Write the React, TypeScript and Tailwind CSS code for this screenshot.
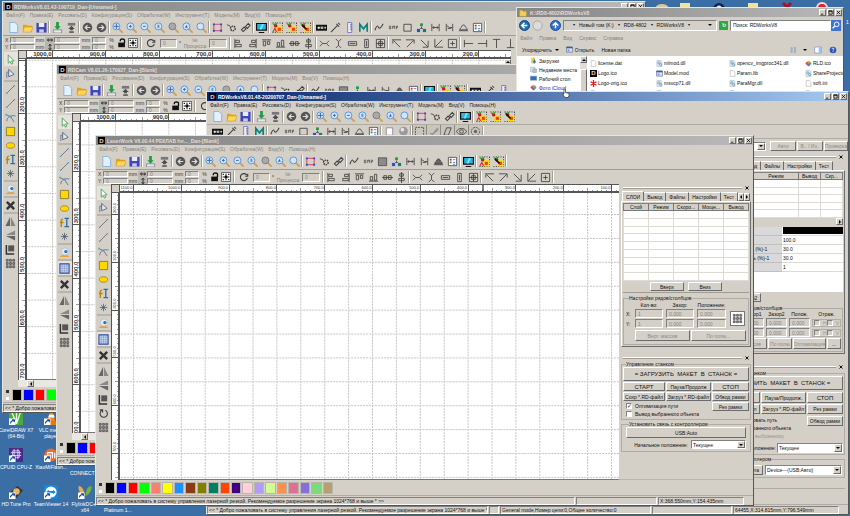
import { Fragment, type ReactNode } from "react";
import clsx from "clsx";

const raised = "border border-t-white border-l-white border-r-[#6b6b6b] border-b-[#6b6b6b]";
const sunken = "border border-t-[#808080] border-l-[#808080] border-r-white border-b-white";
const etched = "border border-[#b0aca4]";

/* ---------- icons ---------- */

function lens(inner?: ReactNode, ring = "#5a8fd2", glass = "#cfe6fa") {
  return (
    <>
      <path d="M7.5 7.5L11 11" stroke="#cf9f56" strokeWidth="2" strokeLinecap="round" />
      <circle cx="4.8" cy="4.8" r="3.8" fill={glass} stroke={ring} strokeWidth="1" />
      {inner}
    </>
  );
}

function job(mark: ReactNode) {
  return (
    <>
      <path d="M0.5 1h11M0.5 11.5h11M11.5 1v10" stroke="#222" strokeDasharray="1 1.6" fill="none" />
      <rect x="5.5" y="5.5" width="5" height="5" fill="#f33" stroke="#f6e200" strokeWidth="1.6" />
      <circle cx="4" cy="4" r="1.9" fill="#c11" />
      <path d="M1 2l3 1 1-2" stroke="#2a9a2a" strokeWidth="1.3" fill="none" />
      {mark}
    </>
  );
}

const dark = { stroke: "#3d3d3d", strokeWidth: 0.9, fill: "none" };

const icons: Record<string, ReactNode> = {
  new: <path d="M2 .5h5.5l3 3v8H2z" fill="#e3f1fd" stroke="#6aa7dc" strokeWidth=".8" />,
  open: (
    <>
      <path d="M1 3h4l1 1h5v7H1z" fill="#e2a51c" />
      <path d="M2.5 5.5H12l-2 5.5H1z" fill="#ffd659" stroke="#c88b12" strokeWidth=".5" />
    </>
  ),
  save: (
    <>
      <path d="M.5 1h11v10.5H.5z" fill="#3f45b8" />
      <path d="M3 1h6v4.5H3z" fill="#e8ecff" />
      <path d="M3.5 8h5v3.5h-5z" fill="#c9cdea" />
    </>
  ),
  download: (
    <>
      <path d="M1.5 8.5h9V12h-9z" fill="#e8e8e8" stroke="#6e7b86" strokeWidth=".8" />
      <path d="M6 8.5L2.5 4.500h2V0h3v4.500h2z" fill="#1d9e3f" />
    </>
  ),
  upload: (
    <>
      <path d="M2 1h8v3H2z" fill="#777" />
      <path d="M6 4l3.5 3.5h-2V9h-3V7.5h-2z" fill="#4c4c4c" />
      <path d="M3.5 10h5v2h-5z" fill="#666" />
    </>
  ),
  undo: (
    <>
      <circle cx="6" cy="6" r="5.2" fill="#555" />
      <path d="M9 6H3.5M6 3.5L3.5 6 6 8.5" stroke="#ddd" strokeWidth="1.3" fill="none" />
    </>
  ),
  redo: (
    <>
      <circle cx="6" cy="6" r="5.2" fill="#555" />
      <path d="M3 6h5.500M6 3.5L8.5 6 6 8.5" stroke="#ddd" strokeWidth="1.3" fill="none" />
    </>
  ),
  zoomMove: lens(<path d="M4.8 2v5.600M2 4.8h5.600" stroke="#2f62b4" />),
  zoomIn: lens(<path d="M4.8 3.3v3M3.3 4.8h3" stroke="#2f62b4" />),
  zoomOut: lens(<path d="M3.3 4.8h3" stroke="#2f62b4" />),
  zoomPage: lens(<path d="M3.7 3h2.200v3.600H3.700z" fill="#6d93c4" />),
  zoomData: lens(null, "#7d7d7d", "#a9a9a9"),
  zoomSel: lens(<path d="M3.3 6.3l1.500-3.300 1.500 3.300z" fill="#2f62b4" />),
  zoomAll: lens(),
  frame: (
    <>
      <path d="M2 2.500h8v7H2z" fill="none" stroke="#d33a5e" />
      <path d="M1 1.500h2v2H1zM9 1.500h2v2H9zM1 8.500h2v2H1zM9 8.500h2v2H9z" fill="#3246c7" />
    </>
  ),
  gear: (
    <>
      <circle cx="7.5" cy="7" r="2.5" {...dark} strokeDasharray="1.5 .8" strokeWidth={1.6} />
      <path d="M1 3l3 1 1 2" {...dark} />
    </>
  ),
  link: <path d="M1.5 8.5l3-3 2 2-3 3zM6 5l3-3.500 2 2L8 7z" {...dark} strokeWidth={1.1} />,
  monitor: (
    <>
      <path d="M0 1h12v8.500H0zM3 11h6v1H3z" fill="#101010" />
      <path d="M1.3 2.200h9.400v6H1.300z" fill="#22b8e6" />
      <path d="M6.5 2.200h2L6 8.200H4z" fill="#8ae4fa" />
    </>
  ),
  jobA: job(<path d="M1 11l2-4 2 4" stroke="#e22" strokeWidth="1.2" fill="none" />),
  jobB: job(null),
  jobC: job(<path d="M2 3l5 5" stroke="#111" strokeWidth="1.8" />),
  laser: (
    <>
      <path d="M0 3h12v6.500H0z" fill="#111" />
      <circle cx="3" cy="6.2" r="1.3" fill="#ddd" />
      <path d="M5 5h3v2.500H5z" fill="#bbb" />
      <circle cx="10" cy="6.2" r="1" fill="#ddd" />
    </>
  ),
  pen: <path d="M1 11l7-7M7 2l3 3M9 1l2 2" {...dark} strokeWidth={1.1} />,
  rule: (
    <>
      <path d="M4 .5h4.500v11H4z" fill="#eef" stroke="#5560c8" strokeWidth=".8" />
      <path d="M6.5 2.500h2M6.5 4.500h2M6.5 6.500h2M6.5 8.500h2" stroke="#333" strokeWidth=".6" />
    </>
  ),
  model: <path d="M2 10.500v-8l4 5 4-5v8" stroke="#0b8080" strokeWidth="1.8" fill="none" />,
  curve: <path d="M1 9c2-6 3-5 4-3s3 0 5-4" {...dark} strokeWidth={1.1} />,
  bmp: (
    <path d="M1.5 4.500h1.500v3H1.500zM5 7.500v-3h1.500v1.500M7 7.500v-3h.8M9 8V4.500h1.500v1.500H9" {...dark} strokeWidth={0.7} />
  ),
  square: <path d="M2 2.500h8v7.500H2z" {...dark} />,
  fill: <path d="M1.5 2h9v8.500h-9z" fill="#8b8b8b" stroke="#555" />,
  rgb: (
    <>
      <path d="M6 5v2M3 9l2-2h2l2 2" {...dark} />
      <path d="M4.5 1.500h3v3h-3z" fill="#159c3b" />
      <path d="M1 7.500h3.500V11H1z" fill="#2b50d8" />
      <path d="M7.5 7.500H11V11H7.500z" fill="#187a6d" />
    </>
  ),
  joinH: <path d="M2 2v8M10 2v8M3 6h6M4.5 4.500L3 6l1.500 1.500M7.5 4.500L9 6 7.500 7.500" {...dark} />,
  joinN: <path d="M2.5 2v8M9.5 2v8M3 4l3 2h3M4 7h4" {...dark} />,
  dome: <path d="M1 9.500h10M2 8.500c0-2 1-2 2-3 0-3 4-3 4 0 1 1 2 1 2 3z" {...dark} />,
  domeFill: <path d="M1 9.500h10M2 8.500c0-2 1-2 2-3 0-3 4-3 4 0 1 1 2 1 2 3z" fill="#666" stroke="#444" />,
  list: (
    <>
      <path d="M1.5 1.500h9v9h-9z" fill="#fff" stroke="#333" strokeWidth=".8" />
      <path d="M3 3h2v2H3z" fill="#d22" />
      <path d="M3 6h2v2H3z" fill="#229b33" />
      <path d="M6.5 4H9M6.5 7H9M6.5 9H9" stroke="#35c" strokeWidth=".8" />
    </>
  ),
  white: <path d="M2.5 2h7v8h-7z" fill="#fff" stroke="#777" strokeWidth=".8" />,
  sphere: (
    <>
      <circle cx="6" cy="5.5" r="4.8" fill="#9a9a9a" />
      <circle cx="4.8" cy="4" r="2" fill="#e4e4e4" />
    </>
  ),
  marquee: <path d="M1.5 1.500h9v9h-9z" {...dark} strokeDasharray="2 1" />,
  sweep: <path d="M2 8l3 1 6-7M4 10l7-6" stroke="#8d8d8d" strokeWidth="1.2" fill="none" />,
  slant: <path d="M2 10l3-8h5L7 10z" {...dark} />,
  eye: (
    <>
      <path d="M.5 6C3 1.500 9 1.500 11.500 6 9 10.500 3 10.500.5 6z" {...dark} />
      <circle cx="6" cy="6" r="2" {...dark} />
    </>
  ),
  target: (
    <>
      <circle cx="6" cy="6" r="4.5" {...dark} strokeDasharray="2 1" />
      <circle cx="6" cy="6" r="1.8" fill="#666" />
    </>
  ),
  pick: <path d="M3.5 1v9l2.200-2 1.300 3 1.500-.7L7.200 7.500H10z" fill="#fff" stroke="#3a9a4a" strokeWidth=".9" />,
  node: (
    <>
      <path d="M2 11V4.500h2" {...dark} stroke="#5b6f8f" />
      <path d="M4 1.500v8l6-2.500z" fill="#dfe9f5" stroke="#49597a" strokeWidth=".9" />
    </>
  ),
  line: (
    <>
      <path d="M2 10l8-8" stroke="#667" strokeWidth=".9" />
      <path d="M1 9.500h1.500V11H1zM9.500 1H11v1.500H9.500z" fill="#4b9fd5" />
    </>
  ),
  bezier: (
    <>
      <path d="M1 3l5 2 4 6M2 10c0-4 3-6 8-6" stroke="#667" fill="none" strokeWidth=".9" />
      <path d="M.5 2H2v1.500H.5zM5 4h2v2H5zM10 3.500h1.500V5H10z" fill="#4b9fd5" />
    </>
  ),
  rect: <path d="M1.5 1.500h9v9h-9z" fill="#ffd800" stroke="#8b7a2f" />,
  ellipse: <ellipse cx="6" cy="6" rx="4.5" ry="3" fill="#ffd800" stroke="#a8871a" />,
  text: (
    <>
      <path d="M2.5 11V3.500L4 2M1 6h4" stroke="#b58a00" strokeWidth="1.5" fill="none" />
      <path d="M6 1.500h5M8.5 1.500v9M6 10.500h5" stroke="#2a6f9e" strokeWidth="1.4" />
    </>
  ),
  star: <path d="M6 2v8M2 6h8M3.2 3.200l5.600 5.600M8.8 3.200L3.200 8.800" stroke="#456" strokeWidth=".8" />,
  camera: (
    <>
      <path d="M1 11c0-3 9-4 10 0z" fill="#f0a030" />
      <circle cx="6.5" cy="5" r="4" fill="#e2eaf1" stroke="#9ab" strokeWidth=".5" />
      <circle cx="7.5" cy="5" r="1.8" fill="#2a76b8" />
    </>
  ),
  grid: (
    <>
      <path d="M1 1h10v10H1z" fill="#c9d9f5" stroke="#2d4a96" strokeWidth="1.2" />
      <path d="M3.5 1v10M6 1v10M8.500 1v10M1 3.500h10M1 6h10M1 8.500h10" stroke="#7c93c6" strokeWidth=".6" />
    </>
  ),
  cross: <path d="M2 2l8 8M10 2l-8 8" stroke="#333" strokeWidth="2.6" />,
  mirrorH: (
    <>
      <path d="M5.5 1v10h-5z" fill="#666" />
      <path d="M6.5 1v10h5z" fill="#888" />
    </>
  ),
  mirrorV: (
    <>
      <path d="M11 .5v5H1z" fill="#888" />
      <path d="M11 11.500v-5H1z" fill="#666" />
    </>
  ),
  corner: (
    <>
      <path d="M1.5 1v10H10" stroke="#333" strokeWidth="1.6" fill="none" />
      <path d="M3.5 1.500H10V8H3.500z" fill="#555" />
    </>
  ),
  rotate: <path d="M2 2h3v3M4.500 2.500a4 4 0 1 0 3.500 0" {...dark} strokeWidth={1.2} />,
  array: (
    <path
      d="M1.5 1.500h2v2h-2zM5 1.500h2v2H5zM8.500 1.500h2v2h-2zM1.500 5h2v2h-2zM5 5h2v2H5zM8.500 5h2v2h-2zM1.500 8.500h2v2h-2zM5 8.500h2v2H5zM8.500 8.500h2v2h-2z"
      fill="#999"
      stroke="#444"
      strokeWidth=".8"
    />
  ),
  spin: <path d="M9.500 4a4.200 4.200 0 1 0 .5 3M10.500 2v3h-3" {...dark} strokeWidth={1.3} />,
  lock: (
    <>
      <path d="M1.5 5.500h8V11h-8z" fill="#111" />
      <path d="M4 4V2.500C4 .8 9 .8 9 2.500V6" {...dark} stroke="#111" strokeWidth={1.6} />
    </>
  ),
  anchor: (
    <>
      <path d="M.5.5h11v11H.5z" fill="#fff" stroke="#444" />
      <path d="M6 2v8M2 6h8" stroke="#111" strokeWidth="1.2" />
      <path
        d="M4.500 4.500h3v3h-3zM2 2h1.500v1.500H2zM8.500 2H10v1.500H8.500zM2 8.500h1.500V10H2zM8.500 8.500H10V10H8.500z"
        fill="#111"
      />
    </>
  ),
  aLeft: <path d="M2 1v10M3 2.500h4v2.500H3zM3 7h6v2.500H3z" {...dark} />,
  aRight: <path d="M10 1v10M5 2.500h4v2.500H5zM3 7h6v2.500H3z" {...dark} />,
  aTop: <path d="M1 2h10M2.500 3.500H5v5H2.500zM7 3.500h2.500V7H7z" {...dark} />,
  aBottom: <path d="M1 10h10M2.500 5H5v4H2.500zM7 2.500h2.500V9H7z" {...dark} />,
  aMidH: <path d="M0 6h12M2 4h3v4H2zM7 4h3v4H7z" {...dark} />,
  aMidV: <path d="M6 0v12M4 2h4v2.500H4zM3 7h6v2.500H3z" {...dark} />,
  sHoriz: <path d="M1 3l3 3-3 3M11 3L8 6l3 3M4 6h4" {...dark} />,
  sVert: <path d="M3 1l3 3 3-3M3 11l3-3 3 3M6 4v4" {...dark} />,
  sWide: <path d="M1.500 4h9v4h-9zM3 6h6" {...dark} />,
  sTall: <path d="M4 1.500h4v9H4zM6 3v6" {...dark} />,
  sBoth: <path d="M1.500 1.500h9v9h-9zM6 1.500v9M1.500 6h9M4 4h4v4H4z" {...dark} />,
  cTL: <path d="M10 10L2.500 2.500M1 2h10M2 3v3" {...dark} />,
  cTR: <path d="M2 10l7.500-7.500M1 2h9v4" {...dark} />,
  cBR: <path d="M2 2l7.500 7.500M10 3v7H4" {...dark} />,
  cBL: <path d="M10 2L2.500 9.500M2 1v9h9" {...dark} />,
  cMid: <path d="M1.500 1.500h9v9h-9zM6 3.500v5M3.500 6h5" {...dark} />,
  eLeft: <path d="M1.500 2v8M1.500 6H11" {...dark} />,
  eRight: <path d="M10.500 2v8M10.500 6H1" {...dark} />,
  eTop: <path d="M2 1.500h8M6 1.500V11" {...dark} />,
  eBottom: <path d="M2 10.500h8M6 10.500V1" {...dark} />,
  sizeH: <path d="M1 6h10M3.500 3L1 6l2.500 3M8.500 3L11 6 8.500 9" {...dark} stroke="#111" strokeWidth={1.6} />,
  sizeV: <path d="M6 1v10M3 3l3-2 3 2M3 9l3 2 3-2" {...dark} stroke="#111" strokeWidth={1.6} />,
  file: <path d="M2 1h5.500L10 3.500V11H2z" fill="#fff" stroke="#999" strokeWidth=".8" />,
  dll: (
    <>
      <path d="M1.500 1h7L10 2.500V11H1.500z" fill="#e9f0f6" stroke="#8fa5b8" strokeWidth=".8" />
      <circle cx="5" cy="5" r="2" fill="none" stroke="#4d8fb8" strokeWidth="1.2" />
      <circle cx="8" cy="8" r="1.8" fill="none" stroke="#4d8fb8" strokeWidth="1.2" />
    </>
  ),
  flower: <path d="M6 0v12M1 3l10 6M11 3L1 9" stroke="#e01818" strokeWidth="2.2" />,
  folder: <path d="M1 2h4l1 1.500h5V11H1z" fill="#f3cf55" stroke="#c79a22" strokeWidth=".6" />,
  downFolder: (
    <>
      <path d="M2 1h7v10H2z" fill="#f3cf55" />
      <path d="M7.500 4v5M5 7l2.500 3L10 7" stroke="#1d84d0" strokeWidth="1.8" fill="none" />
    </>
  ),
  recent: (
    <>
      <path d="M1 2h7v8H1z" fill="#dfe8ee" stroke="#8a9aa5" strokeWidth=".8" />
      <path d="M5 5h6v6H5z" fill="#b5c9d6" stroke="#6e8597" strokeWidth=".8" />
    </>
  ),
  screen: <path d="M.5 2h11v7H.5z" fill="#2f6fc6" stroke="#89a" strokeWidth=".8" />,
  photos: (
    <>
      <circle cx="6" cy="3.5" r="2.4" fill="#f5a623" />
      <circle cx="8.5" cy="6" r="2.4" fill="#5cb85c" />
      <circle cx="6" cy="8.5" r="2.4" fill="#4a78e0" />
      <circle cx="3.5" cy="6" r="2.4" fill="#e2475b" />
    </>
  ),
  app: (
    <>
      <path d="M1 1.500h10v9H1z" fill="#dfe8f6" stroke="#3c5b94" />
      <path d="M1 1.500h10V4H1z" fill="#3c5b94" />
      <path d="M3 6h3v3H3z" fill="#6f8fc7" />
    </>
  ),
  tiles: <path d="M1 2h3v2H1zM6 2h3v2H6zM1 5h3v2H1zM6 5h3v2H6zM1 8h3v2H1zM6 8h3v2H6z" fill="#8fa6bc" />,
  pane: (
    <>
      <path d="M1 1.500h10v9H1z" fill="#fff" stroke="#7293b5" />
      <path d="M7 2h3.500v8H7z" fill="#8fc6ef" />
    </>
  ),
  help: (
    <>
      <circle cx="6" cy="6" r="5" fill="#2c55b8" />
      <path d="M4.500 4.500c0-2 3-2 3 0 0 1-1.500 1-1.500 2.500M6 8v1.200" stroke="#fff" strokeWidth="1.2" fill="none" />
    </>
  ),
};
icons.line2 = icons.line;

function Icon({ name, className = "size-[11px]" }: { name: string; className?: string }) {
  return (
    <svg viewBox="0 0 12 12" className={clsx("block flex-none", className)} aria-hidden="true">
      {icons[name]}
    </svg>
  );
}

/* ---------- shared controls ---------- */

function Btn({ children, className }: { children: ReactNode; className?: string }) {
  return (
    <button
      type="button"
      className={clsx("flex items-center justify-center overflow-hidden bg-[#d4d0c8] whitespace-pre", raised, className)}
    >
      {children}
    </button>
  );
}

const arrows = {
  up: "M0 3h4L2 1z",
  down: "M0 1h4L2 3z",
  left: "M3 0v4L1 2z",
  right: "M1 0v4l2-2z",
};

function Arrow({ to }: { to: keyof typeof arrows }) {
  return (
    <svg viewBox="0 0 4 4" className="size-[4px] flex-none" aria-hidden="true">
      <path d={arrows[to]} />
    </svg>
  );
}

function Field({ label, value, className }: { label: string; value: string; className?: string }) {
  return (
    <input
      aria-label={label}
      defaultValue={value}
      disabled
      className={clsx("block min-w-0 bg-[#d4d0c8] px-[2px] text-[#85827c]", sunken, className)}
    />
  );
}

function Tick({ label, checked, muted }: { label: string; checked?: boolean; muted?: boolean }) {
  return (
    <label className={clsx("flex items-center gap-[3px] whitespace-nowrap", muted && "text-[#9a968e]")}>
      <input
        type="checkbox"
        defaultChecked={checked}
        disabled={muted}
        className={clsx(
          "flex size-[6px] flex-none appearance-none items-center justify-center bg-white before:text-[6px] before:leading-none checked:before:content-['✓'] disabled:bg-[#d4d0c8]",
          sunken,
        )}
      />
      {label}
    </label>
  );
}

function Combo({ label, value, className }: { label: string; value: string; className?: string }) {
  return (
    <div className={clsx("flex bg-white", sunken, className)}>
      <select aria-label={label} className="min-w-0 flex-1 appearance-none bg-white pl-px outline-none">
        <option>{value}</option>
      </select>
      <span className={clsx("flex w-[8px] items-center justify-center bg-[#d4d0c8]", raised)}>
        <Arrow to="down" />
      </span>
    </div>
  );
}

function WindowButtons() {
  return (
    <div className="flex gap-px">
      {[
        { name: "Свернуть", d: "M1 5h3" },
        { name: "Развернуть", d: "M1 1h4v4H1zM1 1.500h4" },
        { name: "Закрыть", d: "M1 1l4 4M5 1L1 5" },
      ].map((b) => (
        <Btn key={b.name} className="size-[7px]">
          <svg viewBox="0 0 6 6" className="size-[5px] flex-none" role="img" aria-label={b.name}>
            <path d={b.d} fill="none" stroke="#000" strokeWidth=".9" />
          </svg>
        </Btn>
      ))}
    </div>
  );
}

function Grip() {
  return (
    <div className="flex h-[7px] items-center gap-[3px] px-[2px]">
      <div className="h-[2px] flex-1 border-t border-b border-t-white border-b-[#a09c94]" />
      <button type="button" aria-label="Скрыть панель" className="flex size-[4px] items-center justify-center">
        <svg viewBox="0 0 4 4" className="size-[4px]"><path d="M.5.5l3 3M3.500.5l-3 3" stroke="#111" /></svg>
      </button>
    </div>
  );
}

function Group({ title, className, children }: { title: string; className?: string; children: ReactNode }) {
  return (
    <fieldset className={clsx("min-w-0", etched, className)}>
      <legend className="ml-[3px] h-[6px] leading-[6px]">{title}</legend>
      {children}
    </fieldset>
  );
}

function Tabs({ items }: { items: string[] }) {
  return (
    <div role="tablist" className="flex h-[10px] items-end">
      {items.map((t, i) => (
        <button
          key={t}
          type="button"
          role="tab"
          aria-selected={i === 0}
          className={clsx(
            "border-t border-r border-t-white border-r-[#6b6b6b] px-[3px]",
            i === 0 ? "h-[10px] border-l border-l-white" : "h-[9px]",
          )}
        >
          {t}
        </button>
      ))}
    </div>
  );
}

function Sep() {
  return <div className="h-[12px] w-[2px] flex-none border-r border-l border-r-white border-l-[#a09c94]" />;
}

function Tools({ groups, pressed }: { groups: string[][]; pressed?: string[] }) {
  return groups.map((g, i) => (
    <Fragment key={i}>
      {i > 0 && <Sep />}
      {g.map((name) => (
        <button
          key={name}
          type="button"
          aria-label={name}
          className={clsx(
            "flex h-[14px] w-[14px] flex-none items-center justify-center",
            pressed?.includes(name) && "border-l border-[#8d8a84] bg-[#c9c5bd]",
          )}
        >
          <Icon name={name} />
        </button>
      ))}
    </Fragment>
  ));
}

/* ---------- program window parts ---------- */

const fileTools = [
  ["new", "open", "save"],
  ["download", "upload"],
  ["undo", "redo"],
  ["zoomMove", "zoomIn", "zoomOut", "zoomPage", "zoomData", "zoomSel", "zoomAll"],
  ["frame", "gear", "link"],
];
const jobs = ["jobA", "jobB", "jobC"];
const machine = ["laser", "pen", "rule", "model"];
const shapes = ["curve", "bmp", "square", "rgb", "joinH", "joinN", "dome", "list"];
const shapesOld = ["curve", "bmp", "fill", "rgb", "joinH", "joinN", "domeFill", "list"];
const effects = ["marquee", "sweep", "slant", "eye", "target"];

const alignTools = [
  ["aLeft", "aRight", "aTop", "aBottom", "aMidH", "aMidV"],
  ["sHoriz", "sVert", "sWide", "sTall", "sBoth"],
  ["cTL", "cTR", "cBR", "cBL", "cMid"],
];
const edgeTools = ["eLeft", "eRight", "eTop", "eBottom"];

const drawTools = [["pick", "node"], ["line", "line2", "bezier", "rect", "ellipse", "text", "star"], ["camera"]];

const fullMenu = [
  "Файл(F)", "Правка(E)", "Рисовать(D)", "Конфигурация(S)", "Обработка(W)",
  "Инструмент(T)", "Модель(M)", "Вид(V)", "Помощь(H)",
];

const swatches = [
  "bg-[#000000]", "bg-[#0000ff]", "bg-[#ff0000]", "bg-[#00ff00]", "bg-[#fa8072]",
  "bg-[#ffff00]", "bg-[#1e90ff]", "bg-[#8b3a12]", "bg-[#808000]", "bg-[#008060]",
  "bg-[#ff4500]", "bg-[#400080]", "bg-[#ffd0dc]", "bg-[#b09cf8]", "bg-[#d2fa96]",
  "bg-[#fa9050]", "bg-[#dc7096]", "bg-[#8470d8]", "bg-[#78dc78]", "bg-[#b4a070]",
];

const welcome =
  "<< * Добро пожаловать в систему управления лазерной резкой. Рекомендуемое разрешение экрана 1024*768 и выше * >>";

type Scale = { from: number; first: number; step: number; count: number };

function marks({ first, step, count }: Scale) {
  const list: { at: number; len: number }[] = [];
  for (let i = -10; i < count * 10; i++) {
    const at = Math.round(first + (i * step) / 10);
    if (at >= 0) list.push({ at, len: i % 10 === 0 ? 9 : i % 5 === 0 ? 4 : 2 });
  }
  return list;
}

function RulerTop({ scale, big, cursor }: { scale: Scale; big?: boolean; cursor?: number }) {
  return (
    <svg className="block h-[9px] min-w-0 flex-1 border-t border-b-2 border-[#555] bg-white">
      {marks(scale).map((m) => (
        <path key={m.at} d={`M${m.at + 0.5} 7v-${m.len}`} stroke="#555" strokeWidth={m.len > 4 ? 1 : 0.6} />
      ))}
      {Array.from({ length: scale.count }, (_, i) => (
        <text
          key={i}
          x={scale.first + i * scale.step - 0.5}
          y={big ? 5 : 4}
          textAnchor="end"
          className={clsx(big ? "text-[6px] font-bold" : "text-[4px]")}
          fill="#333"
        >
          {scale.from - i * 100}.0
        </text>
      ))}
      {cursor && <path d={`M${cursor} 0v8`} stroke="#000" strokeWidth="1" />}
    </svg>
  );
}

function RulerSide({ scale, big }: { scale: Scale; big?: boolean }) {
  return (
    <svg className="block w-[9px] flex-none border-r-2 border-l border-[#555] bg-white">
      {marks(scale).map((m) => (
        <path key={m.at} d={`M7 ${m.at + 0.5}h-${m.len}`} stroke="#555" strokeWidth={m.len > 4 ? 1 : 0.6} />
      ))}
      {Array.from({ length: scale.count }, (_, i) => (
        <text
          key={i}
          transform={`translate(${big ? 5 : 4} ${scale.first + i * scale.step - 1}) rotate(-90)`}
          className={clsx(big ? "text-[6px] font-bold" : "text-[4px]")}
          fill="#333"
        >
          {scale.from + i * 100}.0
        </text>
      ))}
    </svg>
  );
}

function Workspace({ id, h, v, big, cursor, scroll }: {
  id: string; h: Scale; v: Scale; big?: boolean; cursor?: number; scroll?: boolean;
}) {
  return (
    <div className="flex min-w-0 flex-1 flex-col">
      <div className="flex">
        <div className="h-[9px] w-[9px] flex-none border border-[#555] bg-[#d4d0c8]" />
        <RulerTop scale={h} big={big} cursor={cursor} />
      </div>
      <div className="flex min-h-0 flex-1">
        <RulerSide scale={v} big={big} />
        <svg className="block h-full min-w-0 flex-1 border-b border-[#777] bg-white">
          <defs>
            <pattern id={id} x={h.first} y={v.first} width={h.step / 2} height={v.step / 2} patternUnits="userSpaceOnUse">
              <path d={`M.5 0V${h.step}M0 .5H${h.step}`} stroke="#c6c4bf" strokeDasharray="2 1" />
            </pattern>
          </defs>
          <rect width="100%" height="100%" fill={`url(#${id})`} />
        </svg>
        {scroll && (
          <div className="w-[7px] bg-[#e9e7e2]">
            <Btn className="h-[6px] w-[7px]"><Arrow to="up" /></Btn>
          </div>
        )}
      </div>
      {scroll && (
        <div className="h-[7px] bg-[#e9e7e2] pl-[9px]">
          <Btn className="h-[7px] w-[7px]"><Arrow to="left" /></Btn>
        </div>
      )}
    </div>
  );
}

function TitleBar({ title, active }: { title: string; active?: boolean }) {
  return (
    <div
      className={clsx(
        "flex h-[9px] flex-none items-center gap-[2px] bg-linear-to-r pr-px pl-[2px] font-bold",
        active ? "from-[#0a246a] to-[#a6caf0] text-white" : "from-[#858585] to-[#b9b9b9] text-[#e0ddd6]",
      )}
    >
      <span className="flex size-[7px] flex-none items-center justify-center bg-black text-[6px] leading-none text-[#f4d7cf]">D</span>
      <span className="flex-1 whitespace-nowrap">{title}</span>
      <WindowButtons />
    </div>
  );
}

function MenuBar({ items, active }: { items: string[]; active?: boolean }) {
  return (
    <nav
      className={clsx(
        "flex h-[8px] flex-none items-center gap-[5px] pl-[3px] whitespace-nowrap",
        active ? "text-[#222]" : "text-[#85827c]",
      )}
    >
      {items.map((m) => (
        <button key={m} type="button">{m}</button>
      ))}
    </nav>
  );
}

function Pair({ label, className }: { label: string; className: string }) {
  return (
    <div className="flex flex-col gap-px">
      <Field label={`${label} 1`} value="0" className={clsx("h-[6px]", className)} />
      <Field label={`${label} 2`} value="0" className={clsx("h-[6px]", className)} />
    </div>
  );
}

function Units({ children, className }: { children: string; className: string }) {
  return (
    <div className={clsx("flex flex-none flex-col gap-px text-center leading-[6px] text-[#333]", className)}>
      <span>{children}</span>
      <span>{children}</span>
    </div>
  );
}

function CoordBar({ edges }: { edges?: boolean }) {
  return (
    <div className="flex h-[15px] flex-none items-center border-t border-[#a09c94] pl-[2px]">
      <div className="flex w-[5px] flex-none flex-col gap-px leading-[6px] text-[#333]">
        <span>X</span>
        <span>Y</span>
      </div>
      <Pair label="Позиция" className="w-[25px]" />
      <Units className="w-[10px]">mm</Units>
      <div className="flex w-[9px] flex-none flex-col items-center gap-px bg-[#b9b6b0]">
        <Icon name="sizeH" className="size-[6px]" />
        <Icon name="sizeV" className="size-[6px]" />
      </div>
      <Pair label="Размер" className="w-[26px]" />
      <Units className="w-[12px]">mm</Units>
      <Pair label="Масштаб" className="w-[14px]" />
      <Units className="w-[11px]">%</Units>
      <button type="button" aria-label="Сохранять пропорции" className="mr-px"><Icon name="lock" className="size-[10px]" /></button>
      <button type="button" aria-label="Точка привязки" className="mr-[2px]"><Icon name="anchor" className="size-[10px]" /></button>
      <Sep />
      <button type="button" aria-label="Поворот" className="mx-[4px]"><Icon name="spin" className="size-[10px]" /></button>
      <Field label="Угол" value="0" className="h-[9px] w-[17px]" />
      <span className="w-[6px] text-center leading-[10px]">°</span>
      <div className="w-[24px] text-center leading-[6px] text-[#85827c]">№ Процесса</div>
      <Field label="№ Процесса" value="0" className="mx-[2px] h-[9px] w-[18px]" />
      <Sep />
      <Tools groups={edges ? [...alignTools, edgeTools] : alignTools} />
      <Sep />
    </div>
  );
}

function DrawBar({ tail }: { tail: string[][] }) {
  return (
    <div className="flex w-[15px] flex-none flex-col items-center pt-[2px]">
      {[...drawTools, ...tail].map((g, i) => (
        <div key={i} className={clsx("flex flex-col items-center", i > 0 && "border-t-2 border-[#b9b5ad]")}>
          {g.map((name) => (
            <button
              key={name}
              type="button"
              aria-label={name}
              className={clsx(
                "flex h-[14px] w-[14px] items-center justify-center",
                (name === "pick" || name === "grid") && "bg-[#e6e3dd]",
              )}
            >
              <Icon name={name} />
            </button>
          ))}
        </div>
      ))}
    </div>
  );
}

function Palette() {
  return (
    <div className="flex h-[15px] flex-none items-center gap-[3px] pl-[3px]">
      <div className="flex h-[10px] w-[3px] flex-col justify-between">
        <span className="size-[3px] bg-[#333]" />
        <span className="size-[3px] bg-white" />
      </div>
      <div className="flex w-[228px] flex-none gap-px">
        {swatches.map((c) => (
          <button key={c} type="button" aria-label="Цвет слоя" className={clsx("h-[12px] flex-1 border border-[#b9b5ad]", c)} />
        ))}
      </div>
    </div>
  );
}

function StatusBar({ cells }: { cells: { text: string; width: string }[] }) {
  return (
    <footer className="flex h-[10px] flex-none items-center gap-px border-t border-[#b0aca4] pr-[9px]">
      {cells.map((c, i) => (
        <div key={i} className={clsx("h-[8px] overflow-hidden pl-px leading-[7px] whitespace-pre", sunken, c.width)}>
          {c.text}
        </div>
      ))}
    </footer>
  );
}

const frame =
  "absolute flex flex-col overflow-hidden bg-[#d4d0c8] border border-t-[#e8e5df] border-l-[#e8e5df] border-r-[#555] border-b-[#555]";

/* ---------- side panels ---------- */

function LaserPanel() {
  return (
    <aside className="flex w-[134px] flex-none flex-col border-b border-[#b9b5ad] px-[2px]">
      <Grip />
      <div className="flex items-end px-px">
        <div className="flex-1"><Tabs items={["СЛОИ", "Вывод", "Файлы", "Настройки", "Тест"]} /></div>
        <Btn className="size-[8px]"><Arrow to="left" /></Btn>
        <Btn className="size-[8px]"><Arrow to="right" /></Btn>
      </div>
      <div className={clsx("flex flex-col p-px", raised)}>
        <table className={clsx("h-[78px] w-full table-fixed border-collapse bg-white", sunken)}>
          <thead>
            <tr className="bg-[#d4d0c8]">
              {["Слой", "Режим", "Скоро...", "Мощн...", "Вывод"].map((c) => (
                <th key={c} className="border-r border-b border-[#777] p-0 font-normal">{c}</th>
              ))}
            </tr>
          </thead>
          <tbody>
            {Array.from({ length: 9 }, (_, r) => (
              <tr key={r}>
                {Array.from({ length: 5 }, (_, c) => (
                  <td key={c} className="border border-[#dedbd5] p-0" />
                ))}
              </tr>
            ))}
          </tbody>
        </table>
        <div className="mt-px flex justify-center gap-[4px] border-b border-[#a09c94] pb-px">
          <Btn className="h-[9px] w-[34px] border-[#333]">Вверх</Btn>
          <Btn className="h-[9px] w-[34px]">Вниз</Btn>
        </div>
        <Group title="Настройки рядов/столбцов" className="mt-[2px] px-[2px] pb-[3px]">
          <div className="grid grid-cols-[6px_28px_28px_29px_1fr] items-center gap-x-[3px] gap-y-px pt-px">
            <span />
            <span className="text-center">Кол-во:</span>
            <span className="text-center">Зазор:</span>
            <span className="text-center whitespace-nowrap">Положение:</span>
            <button
              type="button"
              aria-label="Массив"
              className="row-span-2 row-start-2 col-start-5 justify-self-center border border-[#777] bg-white p-px"
            >
              <Icon name="array" />
            </button>
            {["X:", "Y:"].map((axis) => (
              <Fragment key={axis}>
                <span className="col-start-1">{axis}</span>
                <Field label={`${axis} кол-во`} value="1" className="h-[9px]" />
                <Field label={`${axis} зазор`} value="0.000" className="h-[9px]" />
                <Field label={`${axis} положение`} value="0.000" className="h-[9px]" />
              </Fragment>
            ))}
          </div>
          <div className="mt-[2px] ml-[9px] grid grid-cols-2 gap-px text-[#8d8a84]">
            <Btn className="h-[11px]">Верт. массив</Btn>
            <Btn className="h-[11px]">По полю...</Btn>
          </div>
        </Group>
      </div>
      <div className="h-[7px]" />
      <Grip />
      <Group title="Управление станком" className="px-px pb-[2px]">
        <Btn className="mb-px h-[14px] w-full text-[6px]">{"= ЗАГРУЗИТЬ  МАКЕТ  В  СТАНОК ="}</Btn>
        <div className="grid grid-cols-[42px_1fr_37px] gap-px">
          <Btn className="h-[9px] text-[6px]">СТАРТ</Btn>
          <Btn className="h-[9px]">Пауза/Продолж</Btn>
          <Btn className="h-[9px] text-[6px]">СТОП</Btn>
          <Btn className="h-[9px]">Сохр *.RD-файл</Btn>
          <Btn className="h-[9px]">Загруз *.RD-файл</Btn>
          <Btn className="h-[9px]">Обвод рамки</Btn>
          <div className="col-span-2 flex flex-col gap-[2px] pt-px pl-[3px]">
            <Tick label="Оптимизация пути" checked />
            <Tick label="Вывод выбранного объекта" />
          </div>
          <Btn className="h-[9px]">Рез рамки</Btn>
        </div>
      </Group>
      <Group title="Установить связь с контроллером" className="mt-px px-[4px] pb-[2px]">
        <Btn className="h-[11px] w-full">USB:Auto</Btn>
        <div className="mt-[2px] flex items-center justify-end gap-[3px]">
          <span>Начальное положение:</span>
          <Combo label="Начальное положение" value="Текущее" className="h-[9px] w-[55px]" />
        </div>
      </Group>
    </aside>
  );
}

function WorksPanel() {
  return (
    <aside className="ml-auto flex w-[138px] flex-none flex-col px-[3px]">
      <Grip />
      <div className="pl-[6px]"><Tabs items={["Слои", "Вывод", "Файлы", "Настройки", "Тест"]} /></div>
      <div className={clsx("flex flex-col p-px", raised)}>
        <table className={clsx("h-[46px] w-full table-fixed border-collapse bg-white", sunken)}>
          <thead>
            <tr className="bg-[#d4d0c8]">
              {[
                { name: "Слой", width: "w-[38px]" },
                { name: "Режим", width: "" },
                { name: "Вывод", width: "w-[22px]" },
                { name: "Скр...", width: "w-[22px]" },
              ].map((c) => (
                <th key={c.name} className={clsx("border-r border-b border-[#777] p-0 font-normal", c.width)}>{c.name}</th>
              ))}
            </tr>
          </thead>
          <tbody>
            {Array.from({ length: 5 }, (_, r) => (
              <tr key={r}>
                {Array.from({ length: 4 }, (_, c) => (
                  <td key={c} className="border border-[#dedbd5] p-0" />
                ))}
              </tr>
            ))}
          </tbody>
        </table>
        <div className="flex h-[7px] justify-end">
          <Btn className="size-[7px]"><Arrow to="right" /></Btn>
        </div>
        <dl className="mt-[2px] grid h-[65px] grid-cols-[1fr_61px] content-start bg-white leading-[9px]">
          {[
            ["Слой", ""],
            ["Скорость(мм/с)", "100.0"],
            ["Мин. мощность (%)-1", "30.0"],
            ["Макс. мощность (%)-1", "30.0"],
            ["Приоритет", "1"],
          ].map(([k, v]) => (
            <Fragment key={k}>
              <dt className="overflow-hidden border-b border-[#c4c0b8] bg-[#d9d9dc] pl-[3px] leading-[8px] whitespace-nowrap">{k}</dt>
              <dd className="h-[9px] border-b border-[#dedbd5] pl-px leading-[8px]">{v || <div className="h-[7px] bg-black" />}</dd>
            </Fragment>
          ))}
        </dl>
        <div className="mt-px flex justify-start pl-[22px]"><Btn className="h-[9px] w-[24px]">Лазер2</Btn></div>
        <Group title="Настройки рядов/столбцов" className="mt-[3px] px-px pb-[2px]">
          <div className="grid grid-cols-[6px_1fr_21px_21px_21px_29px] items-center gap-x-[2px] gap-y-px">
            <span />
            {["Кол-во", "Зазор1", "Зазор2", "Полож.", "Отраж."].map((t) => (
              <span key={t} className="text-center whitespace-nowrap">{t}</span>
            ))}
            {["X:", "Y:"].map((axis) => (
              <Fragment key={axis}>
                <span>{axis}</span>
                {["1", "0.000", "0.000", "0.000"].map((v, i) => (
                  <Field key={i} label={`${axis} ${i}`} value={v} className="h-[9px]" />
                ))}
                <div className="flex justify-between border border-[#b0aca4] px-px">
                  <Tick label="H" muted />
                  <Tick label="V" muted />
                </div>
              </Fragment>
            ))}
          </div>
          <div className="mt-px ml-[8px] grid grid-cols-[1fr_24px_33px_14px] gap-px text-[#8d8a84]">
            <Btn className="h-[11px]">Верт. массив</Btn>
            <Btn className="h-[11px]">По полю</Btn>
            <Btn className="h-[11px]">Оптимизация</Btn>
            <Btn className="h-[11px] text-black">...</Btn>
          </div>
        </Group>
      </div>
      <div className="h-[9px]" />
      <Grip />
      <Group title="Управление станком" className="px-px pb-px">
        <Btn className="mb-[2px] h-[14px] w-full text-[6px]">{"= ЗАГРУЗИТЬ  МАКЕТ  В  СТАНОК ="}</Btn>
        <div className="grid grid-cols-[1fr_45px_36px] gap-px">
          <Btn className="h-[11px] text-[6px]">СТАРТ</Btn>
          <Btn className="h-[11px]">Пауза/Продолж.</Btn>
          <Btn className="h-[11px] text-[6px]">СТОП</Btn>
          <Btn className="h-[10px]">Сохр *.RD-файл</Btn>
          <Btn className="h-[10px]">Загруз *.RD-файл</Btn>
          <Btn className="h-[10px]">Рез рамки</Btn>
          <div className="col-span-2 flex flex-col gap-[2px] pt-[2px] pl-[3px]">
            <Tick label="Оптимизировать путь" checked />
            <Tick label="Вывод выбранного объекта" />
            <Tick label="Позиция по выбранному" muted />
          </div>
          <Btn className="mt-px h-[10px]">Обвод рамки</Btn>
        </div>
        <div className="mt-[4px] flex items-center justify-end gap-px whitespace-nowrap">
          <span>Начальное положение:</span>
          <Combo label="Начальное положение" value="Текущее" className="h-[10px] w-[66px]" />
        </div>
      </Group>
      <Group title="Связь с контроллером" className="mt-px px-[2px] pb-[2px]">
        <div className="flex gap-[2px] pt-[3px]">
          <Btn className="h-[10px] flex-1">Настройка порта</Btn>
          <Combo label="Порт" value="Device---(USB:Авто)" className="h-[10px] w-[77px]" />
        </div>
      </Group>
      <div className="mt-[10px] border-t border-[#b0aca4]" />
    </aside>
  );
}

/* ---------- explorer ---------- */

const files: [string, string][] = [
  ["file", "license.dat"], ["dll", "mlmod.dll"], ["dll", "opencv_imgproc341.dll"], ["photos", "RLD.ico"],
  ["D", "Logo.ico"], ["app", "Model.mod"], ["file", "Param.lib"], ["dll", "ShareProjector"],
  ["flower", "Logo-orig.ico"], ["dll", "msvcp71.dll"], ["dll", "ParaMgr.dll"], ["file", "soft.ini"],
  ["file", "logo777.png"], ["dll", "msvcr71.dll"], ["dll", "ParkLib.dll"], ["file", "softset.ini"],
];

function Explorer() {
  return (
    <section className={clsx(frame, "top-[7px] left-[516px] h-[90px] w-[328px]")}>
      <div className="flex h-[9px] flex-none items-center gap-[3px] bg-linear-to-r from-[#858585] to-[#b9b9b9] pr-px pl-[2px] font-bold text-[#e0ddd6]">
        <Icon name="folder" className="size-[8px]" />
        <span className="flex-1">K:\RD8-4802\RDWorksV8</span>
        <WindowButtons />
      </div>
      <div className="flex h-[16px] flex-none items-center gap-[2px] px-[2px]">
        <button type="button" aria-label="Назад">
          <svg viewBox="0 0 12 12" className="size-[11px]">
            <circle cx="6" cy="6" r="5.5" fill="#1f6fb2" stroke="#0d4176" />
            <path d="M9 6H3M6 3L3 6l3 3" stroke="#fff" strokeWidth="1.6" fill="none" />
          </svg>
        </button>
        <button type="button" aria-label="Вперед">
          <svg viewBox="0 0 12 12" className="size-[11px]"><circle cx="6" cy="6" r="5" fill="#dcdcda" stroke="#a5a5a3" /></svg>
        </button>
        <button type="button" aria-label="Вверх" className="ml-[5px]">
          <svg viewBox="0 0 12 12" className="size-[11px]">
            <circle cx="6" cy="6" r="5.5" fill="#2f6fcf" stroke="#184a98" />
            <path d="M6 9V3M3 6l3-3 3 3" stroke="#fff" strokeWidth="1.6" fill="none" />
          </svg>
        </button>
        <div className={clsx("flex h-[11px] flex-1 items-center gap-[4px] pl-[9px] whitespace-nowrap", sunken)}>
          {["Новый том (K:)", "RD8-4802", "RDWorksV8"].map((p) => (
            <Fragment key={p}>
              <span className="text-[4px]">▾</span>
              <button type="button">{p}</button>
            </Fragment>
          ))}
          <span className="flex-1 text-[4px]">▾</span>
          <span className="mr-[4px]"><Arrow to="down" /></span>
        </div>
        <button
          type="button"
          aria-label="Обновить"
          className="flex h-[9px] w-[9px] items-center justify-center bg-[#2faa3c] font-bold text-white"
        >
          ↻
        </button>
        <div className="flex">
          <input aria-label="Поиск" defaultValue="Поиск: RDWorksV8" className={clsx("h-[11px] w-[101px] bg-white px-[2px]", sunken)} />
          <button type="button" aria-label="Найти" className="flex h-[11px] w-[10px] items-center justify-center bg-[#3f74d1]">
            <svg viewBox="0 0 12 12" className="size-[8px]">
              <circle cx="7" cy="5" r="3.5" stroke="#fff" strokeWidth="1.5" fill="none" />
              <path d="M4 8l-3 3" stroke="#fff" strokeWidth="2" />
            </svg>
          </button>
        </div>
      </div>
      <nav className="flex h-[10px] flex-none items-center gap-[7px] pl-[3px] text-[#85827c]">
        {["Файл", "Правка", "Вид", "Сервис", "Справка"].map((m) => (
          <button key={m} type="button">{m}</button>
        ))}
      </nav>
      <div className="flex h-[13px] flex-none items-center gap-[7px] pr-[6px] pl-[5px]">
        <button type="button" className="flex items-center gap-[3px]">
          Упорядочить
          <Arrow to="down" />
        </button>
        <button type="button" className="flex items-center gap-[2px]">
          <Icon name="app" className="size-[7px]" />
          Открыть
        </button>
        <button type="button" className="flex-1 text-left">Новая папка</button>
        <button type="button" aria-label="Вид" className="flex items-center gap-[5px]">
          <Icon name="tiles" className="size-[8px]" />
          <Arrow to="down" />
        </button>
        <button type="button" aria-label="Просмотр"><Icon name="pane" className="size-[8px]" /></button>
        <button type="button" aria-label="Справка"><Icon name="help" className="size-[8px]" /></button>
      </div>
      <div className="flex min-h-0 flex-1 bg-white">
        <div className="flex w-[63px] flex-none flex-col pl-[13px]">
          {[
            ["downFolder", "Загрузки"],
            ["recent", "Недавние места"],
            ["screen", "Рабочий стол"],
            ["photos", "Фото iCloud"],
          ].map(([icon, name], i) => (
            <a
              key={name}
              href="#"
              className={clsx("flex h-[9px] items-center gap-[2px] whitespace-nowrap", i === 3 && "text-[#2a2ac0] underline")}
            >
              <Icon name={icon} className="size-[7px]" />
              {name}
            </a>
          ))}
        </div>
        <div className="w-[7px] flex-none bg-[#e0ddd7]">
          <Btn className="size-[7px]"><Arrow to="up" /></Btn>
          <div className={clsx("mt-[6px] h-[30px] bg-[#d4d0c8]", raised)} />
        </div>
        <ul className="grid flex-1 auto-rows-[10px] grid-cols-[66px_73px_76px_1fr] overflow-hidden pt-[2px] pl-[3px]">
          {files.map(([icon, name]) => (
            <li key={name} className="flex items-center gap-px overflow-hidden whitespace-nowrap">
              {icon === "D" ? (
                <span className="flex size-[7px] flex-none items-center justify-center bg-black text-[6px] leading-none font-bold text-[#f4d7cf]">D</span>
              ) : (
                <Icon name={icon} className="size-[7px]" />
              )}
              {name}
            </li>
          ))}
        </ul>
      </div>
    </section>
  );
}

/* ---------- desktop ---------- */

const shortcuts: { name: string; place: string; art: ReactNode }[] = [
  {
    name: "CorelDRAW X7 (64-Bit)", place: "left-[-2px] top-[411px]",
    art: <><path d="M0 0h15v15H0z" fill="#4ba83a" /><path d="M3 1l5 13M8 0v14M12 2L8 14" stroke="#e5f6df" strokeWidth="1.5" /></>,
  },
  {
    name: "VLC media player", place: "left-[33px] top-[411px]",
    art: <><path d="M2 11h11l2 4H0z" fill="#e67a12" /><path d="M7 0h2l3 11H3z" fill="#f08a1d" /><path d="M5.500 4h5l1 3h-7z" fill="#fff" /></>,
  },
  {
    name: "CPUID CPU-Z", place: "left-[-2px] top-[448px]",
    art: <><path d="M0 0h15v15H0z" fill="#4b2a8a" /><path d="M4 3h7v7H4zM5.500 1v11M9.500 1v11M2 5h11M2 8h11" stroke="#d9ccf5" fill="none" /></>,
  },
  {
    name: "XiaoMiFlash...", place: "left-[33px] top-[448px]",
    art: <><circle cx="7.5" cy="7.5" r="7" fill="#f06a2b" /><path d="M4 11V5h5v6M6.500 7v4M11.500 5v6" stroke="#fff" strokeWidth="1.3" fill="none" /></>,
  },
  {
    name: "HD Tune Pro", place: "left-[-2px] top-[485px]",
    art: <><path d="M1 8l8-7 6 5-7 8z" fill="#3b3530" /><circle cx="8" cy="7" r="3.5" fill="#e8b46a" /></>,
  },
  {
    name: "TeamViewer 14", place: "left-[33px] top-[485px]",
    art: <><path d="M0 0h15v15H0z" fill="#1187e0" /><circle cx="7.5" cy="7.5" r="6" fill="#fff" /><path d="M2.500 7.500l3-2.500v1.500h4V5l3 2.500-3 2.500V8.500h-4V10z" fill="#1187e0" /></>,
  },
  {
    name: "FlylinkDC++ x64", place: "left-[67px] top-[485px]",
    art: <><path d="M7 12C0 9 0 1 1 1c3 0 6 4 6 11z" fill="#f0a848" /><path d="M8 12c7-3 7-11 6-11-3 0-6 4-6 11z" fill="#6fb23d" /></>,
  },
];

function Shortcut({ name, place, art }: { name: string; place: string; art: ReactNode }) {
  return (
    <a href="#" className={clsx("absolute flex w-[36px] flex-col items-center gap-[2px] text-center leading-[6px] text-white", place)}>
      <svg viewBox="0 0 15 15" className="size-[14px]">
        {art}
        <path d="M0 8h7v7H0z" fill="#fff" />
        <path d="M1.500 13.500c0-2 1-3 4-3.500M3.500 9.200l2.500.3-.5 2.500" stroke="#1d4fa5" strokeWidth="1.2" fill="none" />
      </svg>
      {name}
    </a>
  );
}

export default function App() {
  return (
    <main className="relative h-screen w-full overflow-hidden bg-[#3a6ea5] font-['Liberation_Sans',sans-serif] text-[5px] leading-[6px] text-[#111]">
      {shortcuts.map((s) => (
        <Shortcut key={s.name} {...s} />
      ))}
      <span className="absolute top-[470px] left-[70px] text-white">CONNECT ...</span>
      <span className="absolute top-[507px] left-[104px] text-white">Platinum 1...</span>
      <span className="absolute top-[19px] left-[846px] text-white">1</span>
      <svg viewBox="0 0 200 8" className="absolute top-0 left-[650px] h-[8px] w-[200px]">
        <ellipse cx="12" cy="7" rx="6" ry="3" fill="#d9c7a4" />
        <path d="M30 3h10v5H30zM98 3h10v5H98z" fill="#f3e39a" />
        <circle cx="69" cy="9" r="6" fill="#10264d" />
        <circle cx="69" cy="8" r="2.5" fill="#e7eef7" />
        <path d="M133 3l4 4 4-4" stroke="#a8121c" strokeWidth="3" fill="none" />
        <circle cx="172" cy="8" r="6" fill="#f3dada" />
        <circle cx="172" cy="8" r="4" fill="#d8232b" />
      </svg>

      <section className={clsx(frame, "top-px left-[2px] h-[412px] w-[644px]")}>
        <TitleBar title="RDWorksV8.01.42-190719_Dan-[Unnamed-]" />
        <MenuBar items={fullMenu} />
        <div className="flex h-[16px] flex-none items-center pl-[3px]">
          <Tools groups={[...fileTools, ["monitor"], jobs, machine, shapes]} />
          <Sep />
        </div>
        <CoordBar edges />
        <div className="flex min-h-0 flex-1">
          <DrawBar tail={[["cross"], ["mirrorH", "mirrorV", "corner", "array"]]} />
          <Workspace
            id="grid-works42"
            big
            scroll
            h={{ from: 1000, first: 25, step: 53.3, count: 9 }}
            v={{ from: 200, first: 54, step: 53.3, count: 6 }}
          />
          <div className="w-[134px] flex-none" />
        </div>
        <Palette />
        <StatusBar cells={[{ text: welcome, width: "flex-1" }]} />
      </section>

      <section className={clsx(frame, "top-[64px] left-[56px] h-[402px] w-[660px]")}>
        <TitleBar title="RDCam V8.01.26-170927_Dan-[Blank]" />
        <MenuBar items={["Файл(F)", "Правка(E)", "Рисование(D)", ...fullMenu.slice(3)]} />
        <div className="flex h-[16px] flex-none items-center pl-[3px]">
          <Tools groups={[...fileTools, shapesOld, ["monitor"], ["jobA", "jobC"], ["laser", "pen", "rule"]]} />
        </div>
        <CoordBar />
        <div className="flex min-h-0 flex-1">
          <DrawBar tail={[["grid"], ["cross"], ["mirrorH", "mirrorV", "corner", "array"]]} />
          <Workspace
            id="grid-cam"
            big
            scroll
            h={{ from: 1000, first: 34, step: 53.3, count: 9 }}
            v={{ from: 200, first: 49, step: 53.3, count: 6 }}
          />
        </div>
        <Palette />
        <StatusBar cells={[{ text: welcome, width: "flex-1" }]} />
      </section>

      <Explorer />

      <section className={clsx(frame, "top-[91px] left-[206px] h-[424px] w-[643px]")}>
        <TitleBar title="RDWorksV8.01.48-20200707_Dan-[Unnamed-]" active />
        <MenuBar items={fullMenu} active />
        <div className="flex h-[16px] flex-none items-center border-b border-[#b0aca4] pl-[3px]">
          <Tools groups={[...fileTools, ["monitor"], jobs]} />
        </div>
        <div className="flex h-[14px] flex-none items-center border-b border-[#b0aca4] pl-[3px]">
          <Tools groups={[machine, shapes, ["white", "sphere"], effects]} pressed={effects} />
          <Sep />
        </div>
        <div className="flex h-[14px] flex-none items-center justify-end gap-px overflow-hidden text-[#8d8a84]">
          <Combo label="Режим" value="" className="mr-[3px] h-[9px] w-[60px]" />
          <Btn className="h-[10px] w-[26px]">Авто</Btn>
          <Btn className="h-[10px] w-[26px]">В.. / Из..</Btn>
          <Btn className="h-[10px] w-[24px]">Проверка</Btn>
        </div>
        <div className="flex min-h-0 flex-1"><WorksPanel /></div>
        <StatusBar
          cells={[
            { text: welcome, width: "flex-1" },
            { text: "", width: "w-[10px]" },
            { text: "General mode,Номер цепи:0,Общее количество:0", width: "w-[151px]" },
            { text: "", width: "w-[80px]" },
            { text: "64455,X:314.815mm,Y:796.549mm", width: "w-[106px]" },
          ]}
        />
      </section>

      <section className={clsx(frame, "top-[135px] left-[95px] h-[371px] w-[659px]")}>
        <TitleBar title="LaserWork V6.00.44 РЕКЛАБ for..._Dan-[Blank]" />
        <MenuBar items={[...fullMenu.slice(0, 5), "Вид(V)", "Помощь(H)"]} />
        <div className="flex h-[16px] flex-none items-center pl-[3px]">
          <Tools groups={[...fileTools, shapesOld, ["monitor"], ["jobA", "jobC"]]} />
          <Sep />
        </div>
        <CoordBar />
        <div className="flex min-h-0 flex-1">
          <DrawBar tail={[["grid"], ["cross"], ["mirrorH", "mirrorV", "corner", "rotate", "array"]]} />
          <Workspace
            id="grid-laser"
            cursor={363}
            h={{ from: 1100, first: 13, step: 47.8, count: 11 }}
            v={{ from: 200, first: 21, step: 47.8, count: 6 }}
          />
          <LaserPanel />
        </div>
        <Palette />
        <StatusBar
          cells={[
            { text: welcome, width: "flex-1" },
            { text: "", width: "w-[81px]" },
            { text: "X:368.550mm,Y:154.435mm", width: "w-[86px]" },
          ]}
        />
      </section>

      <svg viewBox="0 0 8 10" className="absolute top-[88px] left-[562px] h-[10px] w-[8px]">
        <path d="M2 1h1.500v3.500L7 5.500v2L6 9.500H3L.5 6 2 6z" fill="#fff" stroke="#333" strokeWidth=".7" />
      </svg>
    </main>
  );
}
